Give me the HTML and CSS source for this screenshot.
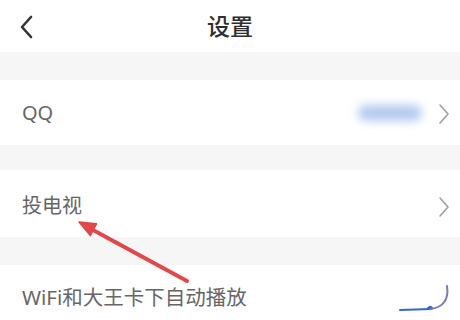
FILE: index.html
```html
<!DOCTYPE html>
<html lang="zh">
<head>
<meta charset="utf-8">
<link rel="stylesheet" href="styles.css">
</head>
<body>
<div class="page">
  <header class="header">
    <svg class="back" width="14" height="24" viewBox="0 0 14 24"><path d="M12 2 L3 12 L12 22" fill="none" stroke="#333" stroke-width="2.6" stroke-linecap="round" stroke-linejoin="round"/></svg>
    <div class="title">设置</div>
  </header>
  <div class="gap gap-a"></div>
  <div class="row row-qq">
    <span class="label">QQ</span>
    <span class="blur"></span>
    <svg class="chev" width="12" height="22" viewBox="0 0 12 22"><path d="M2 2 L10 11 L2 20" fill="none" stroke="#a0a0a0" stroke-width="1.6" stroke-linecap="round" stroke-linejoin="round"/></svg>
  </div>
  <div class="gap gap-b"></div>
  <div class="row row-tv">
    <span class="label">投电视</span>
    <svg class="chev" width="12" height="22" viewBox="0 0 12 22"><path d="M2 2 L10 11 L2 20" fill="none" stroke="#a0a0a0" stroke-width="1.6" stroke-linecap="round" stroke-linejoin="round"/></svg>
  </div>
  <div class="gap gap-c"></div>
  <div class="row row-wifi">
    <span class="label">WiFi和大王卡下自动播放</span>
    <svg class="toggle" width="60" height="64" viewBox="0 0 60 64"><path d="M5 45 L36 44" fill="none" stroke="#3565d6" stroke-width="2" stroke-linecap="round"/><path d="M32 43.5 Q35 39 38.5 43.5" fill="#3565d6" stroke="#3565d6" stroke-width="1"/><path d="M36 44 Q55 41 52 21" fill="none" stroke="#7280b4" stroke-width="2" stroke-linecap="round"/></svg>
  </div>
  <svg class="arrow" width="460" height="320" viewBox="0 0 460 320"><line x1="187" y1="281" x2="93" y2="230" stroke="#e1474b" stroke-width="4" stroke-linecap="round"/><polygon points="79,222 96.5,223.8 90.3,235.6" fill="#e1474b" stroke="#e1474b" stroke-width="1.5" stroke-linejoin="round"/></svg>
</div>
</body>
</html>
```

FILE: styles.css
```css
html, body {
  margin: 0;
  padding: 0;
  background: #fff;
}
.page {
  position: relative;
  width: 460px;
  height: 320px;
  overflow: hidden;
  display: flex;
  flex-direction: column;
  font-family: "Noto Sans", "Noto Sans CJK SC", sans-serif;
}
.header {
  height: 52px;
  flex: none;
  display: grid;
  grid-template-columns: 60px 1fr 60px;
  align-items: center;
  background: #fff;
}
.back {
  margin-left: 19px;
  margin-top: 1px;
}
.title {
  text-align: center;
  font-size: 23px;
  font-weight: 500;
  color: #2e2e2e;
  line-height: 1;
}
.gap {
  flex: none;
  background: #f6f6f6;
}
.gap-a { height: 28px; }
.gap-b { height: 25px; }
.gap-c { height: 28px; }
.row {
  flex: none;
  display: flex;
  align-items: center;
  padding: 0 10px 0 22px;
  background: #fff;
}
.row-qq { height: 65px; }
.row-tv { height: 67px; }
.row-wifi { height: 64px; padding-right: 5px; }
.label {
  font-size: 20px;
  color: #666;
  line-height: 1;
}
.row-tv .label { margin-top: 4px; }
.row-wifi .label { font-size: 20.5px; }
.blur {
  margin-left: auto;
  margin-right: 16px;
  width: 64px;
  height: 16px;
  border-radius: 8px;
  background: #b3caf0;
  filter: blur(5px);
}
.chev {
  flex: none;
}
.row-qq .chev { margin-top: 2px; }
.row-tv .chev { margin-left: auto; margin-top: 6px; }
.toggle {
  margin-left: auto;
}
.arrow {
  position: absolute;
  left: 0;
  top: 0;
  pointer-events: none;
}
```
